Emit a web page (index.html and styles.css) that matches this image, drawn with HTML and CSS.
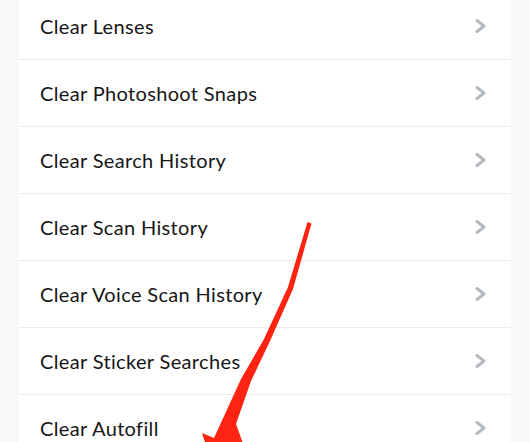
FILE: index.html
```html
<!DOCTYPE html>
<html lang="en">
<head>
  <meta charset="UTF-8">
  <title>Clear Data</title>
  <link rel="stylesheet" href="styles.css">
</head>
<body>
  <ul class="settings-list">
    <li class="row"><span>Clear Lenses</span><svg class="chevron" viewBox="0 0 12 16"><polyline points="2.5,2.5 9.5,8 2.5,13.5"/></svg></li>
    <li class="row"><span>Clear Photoshoot Snaps</span><svg class="chevron" viewBox="0 0 12 16"><polyline points="2.5,2.5 9.5,8 2.5,13.5"/></svg></li>
    <li class="row"><span>Clear Search History</span><svg class="chevron" viewBox="0 0 12 16"><polyline points="2.5,2.5 9.5,8 2.5,13.5"/></svg></li>
    <li class="row"><span>Clear Scan History</span><svg class="chevron" viewBox="0 0 12 16"><polyline points="2.5,2.5 9.5,8 2.5,13.5"/></svg></li>
    <li class="row"><span>Clear Voice Scan History</span><svg class="chevron" viewBox="0 0 12 16"><polyline points="2.5,2.5 9.5,8 2.5,13.5"/></svg></li>
    <li class="row"><span>Clear Sticker Searches</span><svg class="chevron" viewBox="0 0 12 16"><polyline points="2.5,2.5 9.5,8 2.5,13.5"/></svg></li>
    <li class="row"><span>Clear Autofill</span><svg class="chevron" viewBox="0 0 12 16"><polyline points="2.5,2.5 9.5,8 2.5,13.5"/></svg></li>
  </ul>

  <!-- red annotation arrow drawn over the list -->
  <svg class="arrow" viewBox="0 0 530 442" width="530" height="442">
    <polygon points="307.5,222 311.5,223.5 293,289 270,341 251,381 236,424 246,452 214,470 202,433 214,438 241,379 264,339 288,287"/>
  </svg>
</body>
</html>
```

FILE: styles.css
```css
body {
  margin: 0;
  background-color: #f8f8f9;
  font-family: Lato, "Open Sans", sans-serif;
  overflow: hidden;
}

.settings-list {
  list-style: none;
  margin: -7px 19px 0;
  padding: 0;
  background: #fff;
}

.row {
  display: flex;
  align-items: center;
  justify-content: space-between;
  height: 66px;
  padding: 0 24px 0 21px;
  border-bottom: 1px solid #ebebed;
  font-size: 20px;
  letter-spacing: 0.35px;
  color: #161616;
}

.chevron {
  width: 13px;
  height: 16px;
  fill: none;
  stroke: #b3b9c1;
  stroke-width: 3;
  stroke-linecap: round;
  stroke-linejoin: round;
}

.arrow {
  position: absolute;
  top: 0;
  left: 0;
  pointer-events: none;
}

.arrow polygon {
  fill: #ff2412;
}
```
